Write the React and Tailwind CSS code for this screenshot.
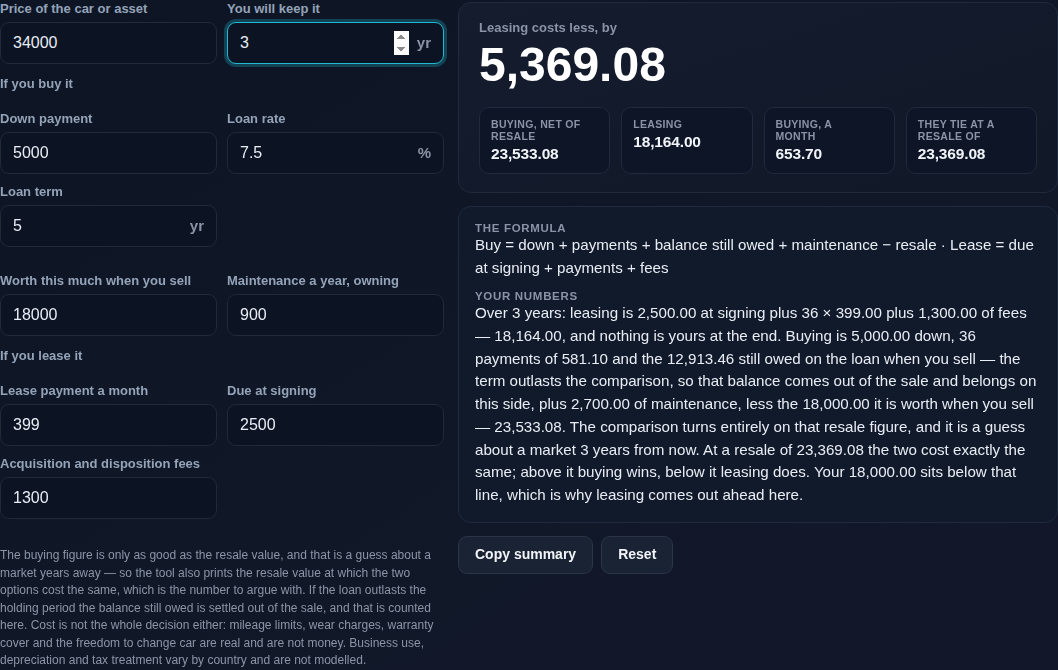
import React from "react";

const font = { fontFamily: '"Liberation Sans", Arial, sans-serif' };

const Field = ({ label, value, suffix, focus, className = "" }) => (
  <label className={`flex flex-col ${className}`}>
    <span className="text-[13px] leading-4 font-bold text-[#94a3b8]">{label}</span>
    <div
      className={`mt-[5px] h-[42px] flex items-center rounded-[9px] border bg-[#0c1322] px-3 ${
        focus
          ? "border-[#22b8d0] shadow-[0_0_0_3px_rgba(34,184,208,0.28)]"
          : "border-[#1f2a3d]"
      }`}
    >
      <input
        type={focus ? "number" : "text"}
        inputMode="decimal"
        defaultValue={value}
        autoFocus={focus}
        className="flex-1 min-w-0 bg-transparent text-[16px] text-[#e8edf5] outline-none"
        style={font}
      />
      {suffix && (
        <span className="ml-2 text-[15px] font-bold text-[#8a94a6]">{suffix}</span>
      )}
    </div>
  </label>
);

const Stat = ({ label, value }) => (
  <div className="rounded-[10px] border border-[#1f2a3d] bg-[#0e1526] pl-[11px] pr-[22px] pt-[10px] h-[67px]">
    <div className="text-[10.5px] leading-[12px] font-bold uppercase tracking-[0.03em] text-[#8a94a6]">
      {label}
    </div>
    <div className="mt-[2px] text-[15.5px] leading-5 font-bold text-[#f1f5f9] tracking-[-0.01em] whitespace-nowrap">
      {value}
    </div>
  </div>
);

export default function App() {
  return (
    <div
      className="min-h-screen w-full bg-gradient-to-br from-[#0d1524] via-[#101827] to-[#12172a] text-white"
      style={font}
    >
      <div className="grid grid-cols-[444px_600px] gap-[14px]">
        {/* left: inputs */}
        <div className="flex flex-col pt-px">
          <div className="grid grid-cols-2 gap-x-[10px]">
            <Field label="Price of the car or asset" value="34000" />
            <Field label="You will keep it" value="3" suffix="yr" focus />
          </div>

          <div className="mt-3 text-[13px] leading-4 font-bold text-[#94a3b8]">If you buy it</div>
          <div className="mt-[19px] grid grid-cols-2 gap-x-[10px] gap-y-[10px]">
            <Field label="Down payment" value="5000" />
            <Field label="Loan rate" value="7.5" suffix="%" />
            <Field label="Loan term" value="5" suffix="yr" />
          </div>
          <div className="mt-[26px] grid grid-cols-2 gap-x-[10px]">
            <Field label="Worth this much when you sell" value="18000" />
            <Field label="Maintenance a year, owning" value="900" />
          </div>

          <div className="mt-3 text-[13px] leading-4 font-bold text-[#94a3b8]">If you lease it</div>
          <div className="mt-[19px] grid grid-cols-2 gap-x-[10px] gap-y-[10px]">
            <Field label="Lease payment a month" value="399" />
            <Field label="Due at signing" value="2500" />
            <Field label="Acquisition and disposition fees" value="1300" />
          </div>

          <p className="mt-[28px] text-[12px] leading-[17.5px] text-[#8b95a6]">
            The buying figure is only as good as the resale value, and that is a guess about a
            market years away — so the tool also prints the resale value at which the two options
            cost the same, which is the number to argue with. If the loan outlasts the holding
            period the balance still owed is settled out of the sale, and that is counted here.
            Cost is not the whole decision either: mileage limits, wear charges, warranty cover and
            the freedom to change car are real and are not money. Business use, depreciation and tax
            treatment vary by country and are not modelled.
          </p>
        </div>

        {/* right: results */}
        <div className="flex flex-col pt-[2px]">
          <div className="rounded-[13px] border border-[#1f2a3d] bg-gradient-to-br from-[#141c2e] to-[#111827] px-5 pt-[17px] pb-[18px]">
            <div className="text-[13px] leading-4 font-bold text-[#8a94a6]">Leasing costs less, by</div>
            <div className="mt-[5px] text-[48px] leading-[48px] font-bold text-white">5,369.08</div>
            <div className="mt-[18px] grid grid-cols-4 gap-[11px]">
              <Stat label="Buying, net of resale" value="23,533.08" />
              <Stat label="Leasing" value="18,164.00" />
              <Stat label="Buying, a month" value="653.70" />
              <Stat label="They tie at a resale of" value="23,369.08" />
            </div>
          </div>

          <div className="mt-[13px] rounded-[13px] border border-[#1f2a3d] bg-[#111a2b] px-4 pt-[15px] pb-[15px]">
            <div className="text-[11.5px] leading-3 font-bold uppercase tracking-[0.06em] text-[#8a94a6]">
              The formula
            </div>
            <div className="text-[15.15px] leading-[22.5px] text-[#e8edf5]">
              Buy = down + payments + balance still owed + maintenance − resale · Lease = due at
              signing + payments + fees
            </div>
            <div className="mt-[11px] text-[11.5px] leading-3 font-bold uppercase tracking-[0.06em] text-[#8a94a6]">
              Your numbers
            </div>
            <div className="text-[15.15px] leading-[22.75px] text-[#e8edf5]">
              Over 3 years: leasing is 2,500.00 at signing plus 36 × 399.00 plus 1,300.00 of fees
              — 18,164.00, and nothing is yours at the end. Buying is 5,000.00 down, 36 payments of
              581.10 and the 12,913.46 still owed on the loan when you sell — the term outlasts the
              comparison, so that balance comes out of the sale and belongs on this side, plus
              2,700.00 of maintenance, less the 18,000.00 it is worth when you sell — 23,533.08.
              The comparison turns entirely on that resale figure, and it is a guess about a market
              3 years from now. At a resale of 23,369.08 the two cost exactly the same; above it
              buying wins, below it leasing does. Your 18,000.00 sits below that line, which is why
              leasing comes out ahead here.
            </div>
          </div>

          <div className="mt-[13px] flex gap-2">
            <button className="h-[38px] rounded-[9px] border border-[#2a3548] bg-[#1a2334] px-4 text-[14px] font-bold text-[#f1f5f9]">
              Copy summary
            </button>
            <button className="h-[38px] rounded-[9px] border border-[#2a3548] bg-[#1a2334] px-4 text-[14px] font-bold text-[#f1f5f9]">
              Reset
            </button>
          </div>
        </div>
      </div>
    </div>
  );
}
